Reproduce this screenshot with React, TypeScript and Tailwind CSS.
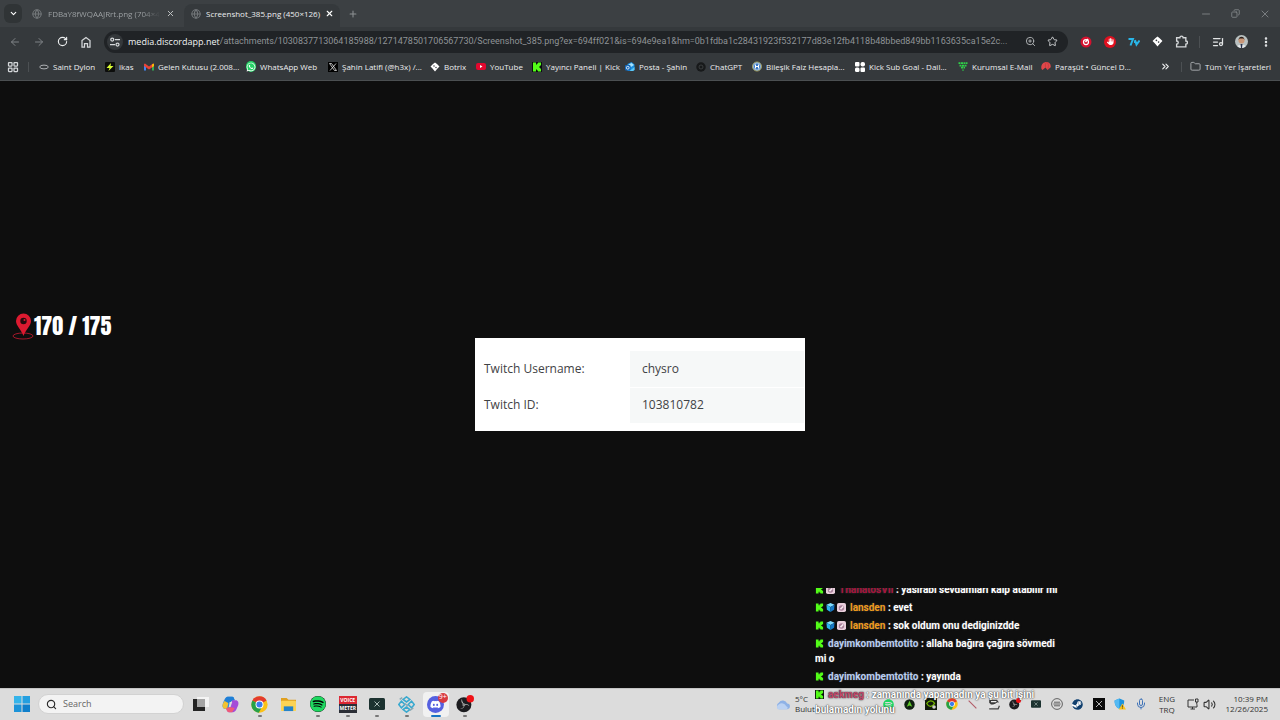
import React from 'react';
import type { ReactNode } from 'react';
import {
  ArrowLeft,
  ArrowRight,
  ChevronDown,
  ChevronsRight,
  Copy,
  EllipsisVertical,
  Folder,
  Globe,
  LayoutGrid,
  ListMusic,
  Mic,
  Minus,
  Plus,
  RotateCw,
  Search,
  Star,
  Volume2,
  X,
  ZoomIn,
} from 'lucide-react';
import { FaDiscord, FaSpotify, FaSteam, FaWhatsapp, FaHand } from 'react-icons/fa6';

function KickIcon({ className }: { className: string }) {
  return (
    <svg viewBox="0 0 20 20" className={className}>
      <rect width="20" height="20" fill="#0b0e0f" />
      <path d="M2 1h6v4h2V3h2V1h6v6h-2v2h-2v2h2v2h2v6h-6v-2h-2v-2H8v4H2z" fill="#53fc18" />
    </svg>
  );
}

function KickBadge() {
  return <KickIcon className="mr-[2px] inline size-[9px] align-[-1px]" />;
}

function GemBadge() {
  return (
    <svg viewBox="0 0 20 20" className="mr-[2px] inline size-[9px] align-[-1px]">
      <path d="M10 0l9 4-9 5-9-5z" fill="#7fdcff" />
      <path d="M1 4l9 5v11l-8-5z" fill="#2bb3f0" />
      <path d="M19 4l-9 5v11l8-5z" fill="#1577c4" />
    </svg>
  );
}

function PinkBadge() {
  return (
    <svg viewBox="0 0 20 20" className="mr-[2px] inline size-[9px] align-[-1px]">
      <rect width="20" height="20" rx="4" fill="#e9cfdc" />
      <circle cx="10" cy="11" r="6" fill="#a77f99" />
      <path d="M6 13l7-7 2 3-6 6z" fill="#f6e8ef" />
    </svg>
  );
}

function ChromeIcon({ className }: { className: string }) {
  return (
    <svg viewBox="0 0 24 24" className={className}>
      <circle cx="12" cy="12" r="11.5" fill="#fbc116" />
      <path d="M12 12L2 6.300A11.500 11.500 0 0 1 22 6.300z" fill="#e33b2e" />
      <path d="M12 12L2 6.300A11.500 11.500 0 0 0 11 23.500l5-9z" fill="#26a148" />
      <circle cx="12" cy="12" r="5.600" fill="#fff" />
      <circle cx="12" cy="12" r="4.300" fill="#3a7cec" />
    </svg>
  );
}

function ObsIcon({ className }: { className: string }) {
  return (
    <svg viewBox="0 0 24 24" className={className}>
      <circle cx="10.500" cy="13" r="10" fill="#1c1c1f" />
      <g fill="#bdbdbd">
        <path d="M8 5c-2 4 0 7 4 8-3-2-4-5-4-8z" />
        <path d="M18 15c-2-4-6-4-8-1 3-2 6-1 8 1z" />
        <path d="M5 18c5 1 7-2 6-6 0 4-2 6-6 6z" />
      </g>
      <circle cx="10.500" cy="13" r="2" fill="#8d8d8d" />
      <circle cx="19" cy="5" r="5" fill="#f01216" />
    </svg>
  );
}

function BotrixIcon({ className }: { className: string }) {
  return (
    <svg viewBox="0 0 20 20" className={className}>
      <path d="M10 1l4 3 5 5-4 4-5 6-5-6-4-4 5-5z" fill="#fff" />
      <circle cx="8" cy="8" r="1.500" fill="#35393c" />
      <circle cx="12" cy="11" r="1.500" fill="#35393c" />
    </svg>
  );
}

// faded globe shown on image tabs
function TabIcon() {
  return <Globe className="size-[10px] shrink-0 text-[#74787b]" strokeWidth={2.500} />;
}

type Bookmark = { label: string; width: string; icon: ReactNode };

const bookmarks: Bookmark[] = [
  {
    label: 'Saint Dylon',
    width: 'w-[66px]',
    icon: (
      <svg viewBox="0 0 20 20" className="size-[10px]">
        <ellipse cx="10" cy="10" rx="8.500" ry="3.800" fill="none" stroke="#aeb1b4" strokeWidth="2" />
      </svg>
    ),
  },
  {
    label: 'ikas',
    width: 'w-[39px]',
    icon: (
      <svg viewBox="0 0 20 20" className="size-[10px]">
        <rect width="20" height="20" rx="2" fill="#0c0d0c" />
        <path d="M12 2l-9 10h6l-2 6 10-10h-6z" fill="#d8fb33" />
      </svg>
    ),
  },
  {
    label: 'Gelen Kutusu (2.008...',
    width: 'w-[102px]',
    icon: (
      <svg viewBox="0 0 20 20" className="size-[10px]">
        <path d="M0 4h4v13H0z" fill="#4285f4" />
        <path d="M16 4h4v13h-4z" fill="#34a853" />
        <path d="M0 4l2-1 8 6 8-6 2 1v4l-10 7L0 8z" fill="#ea4335" />
        <path d="M16 5l4-2v5l-4 3z" fill="#fbbc04" />
      </svg>
    ),
  },
  {
    label: 'WhatsApp Web',
    width: 'w-[82px]',
    icon: (
      <span className="flex size-[11px] items-center justify-center rounded-full bg-[#25d366]">
        <FaWhatsapp className="size-[10px] text-white" />
      </span>
    ),
  },
  {
    label: 'Şahin Latifi (@h3x) /...',
    width: 'w-[102px]',
    icon: (
      <svg viewBox="0 0 20 20" className="size-[10px]">
        <rect width="20" height="20" fill="#000" />
        <path d="M3 3h4l10 14h-4zM16 3L4 17" fill="none" stroke="#eee" strokeWidth="1.500" />
      </svg>
    ),
  },
  { label: 'Botrix', width: 'w-[46px]', icon: <BotrixIcon className="size-[10px]" /> },
  {
    label: 'YouTube',
    width: 'w-[56px]',
    icon: (
      <svg viewBox="0 0 20 20" className="size-[11px]">
        <rect y="3" width="20" height="14" rx="4" fill="#e3072e" />
        <path d="M8 7l5 3-5 3z" fill="#fff" />
      </svg>
    ),
  },
  { label: 'Yayıncı Paneli | Kick', width: 'w-[93px]', icon: <KickIcon className="size-[10px]" /> },
  {
    label: 'Posta - Şahin',
    width: 'w-[71px]',
    icon: (
      <svg viewBox="0 0 20 20" className="size-[11px]">
        <path d="M5 5l8-4 6 5v11l-4 2H5z" fill="#1b8fe0" />
        <path d="M7 6l6-3 5 4-6 4z" fill="#a8e2fb" />
        <path d="M9 19l10-8v6l-3 2z" fill="#5cc8f7" />
        <rect y="7" width="11" height="11" rx="2" fill="#1467b8" />
        <circle cx="5.500" cy="12.500" r="2.800" fill="none" stroke="#fff" strokeWidth="1.600" />
      </svg>
    ),
  },
  {
    label: 'ChatGPT',
    width: 'w-[56px]',
    icon: (
      <svg viewBox="0 0 20 20" className="size-[10px]">
        <circle cx="10" cy="10" r="9.500" fill="#17191a" />
        <circle cx="10" cy="10" r="4" fill="none" stroke="#44484a" strokeWidth="1.500" />
      </svg>
    ),
  },
  {
    label: 'Bileşik Faiz Hesapla...',
    width: 'w-[103px]',
    icon: (
      <svg viewBox="0 0 20 20" className="size-[11px]">
        <circle cx="10" cy="10" r="9" fill="#3b78c4" stroke="#d5c35a" strokeWidth="1.500" />
        <circle cx="10" cy="10" r="7" fill="none" stroke="#dfe9f5" strokeWidth="1.200" />
        <path d="M7 6v8M13 6v8M7 10h6" stroke="#fff" strokeWidth="2" />
      </svg>
    ),
  },
  {
    label: 'Kick Sub Goal - Dail...',
    width: 'w-[103px]',
    icon: (
      <svg viewBox="0 0 20 20" className="size-[10px]" fill="#fff">
        <rect width="9" height="9" rx="2" />
        <rect x="11" width="9" height="9" rx="4" />
        <rect y="11" width="9" height="9" rx="3" />
        <rect x="11" y="11" width="9" height="9" rx="2" />
      </svg>
    ),
  },
  {
    label: 'Kurumsal E-Mail',
    width: 'w-[83px]',
    icon: (
      <svg viewBox="0 0 20 20" className="size-[11px]">
        <path
          d="M1 3h18M3 8h14M6 12h8M9 17h2"
          stroke="#2fd048"
          strokeWidth="3.500"
          strokeDasharray="4 1"
        />
      </svg>
    ),
  },
  {
    label: 'Paraşüt • Güncel D...',
    width: 'w-[100px]',
    icon: (
      <svg viewBox="0 0 20 20" className="size-[11px]">
        <path d="M1 15C-1 7 4 1 11 1c6 0 10 6 8 11l-6 5-4-5-6 5z" fill="#e0474a" />
        <path d="M9 12c-1-4 0-8 2-11M13 17c2-5 3-9 0-15" stroke="#b52f35" fill="none" />
      </svg>
    ),
  },
];

function WindowControls() {
  return (
    <div className="ml-auto flex items-center gap-[19px] pr-[9px] text-[#8d9194]">
      <button aria-label="Minimize">
        <Minus className="size-3" strokeWidth={1.500} />
      </button>
      <button aria-label="Restore">
        <Copy className="size-[9px] -scale-x-100" strokeWidth={2} />
      </button>
      <button aria-label="Close window">
        <X className="size-3" strokeWidth={1.500} />
      </button>
    </div>
  );
}

function TabStrip() {
  return (
    <div className="flex h-[27px] items-center bg-[#3c4043] text-[8px]">
      <button
        aria-label="Search tabs"
        className="ml-[4px] flex h-[19px] w-[18px] items-center justify-center rounded-md bg-[#303436] text-white"
      >
        <ChevronDown className="size-[9px]" strokeWidth={3} />
      </button>
      <div className="flex w-[162px] items-center pl-[10px] text-[#9b9fa2]">
        <TabIcon />
        <span className="ml-[6px] w-[112px] overflow-hidden whitespace-nowrap [mask-image:linear-gradient(to_right,black_85%,transparent)]">
          FDBaY8fWQAAJRrt.png (704×4
        </span>
        <button aria-label="Close tab" className="ml-[6px] text-[#c3c6c8]">
          <X className="size-[9px]" strokeWidth={2.500} />
        </button>
      </div>
      <div className="flex h-[23px] w-[156px] items-center self-end rounded-t-lg bg-[#35393c] pb-[4px] pl-[7px] text-[#eceeef]">
        <TabIcon />
        <span className="ml-[5px] w-[115px] whitespace-nowrap">Screenshot_385.png (450×126)</span>
        <button aria-label="Close tab" className="ml-[4px] text-white">
          <X className="size-[9px]" strokeWidth={3} />
        </button>
      </div>
      <button aria-label="New tab" className="ml-[8px] text-[#8d9194]">
        <Plus className="size-[10px]" strokeWidth={2.500} />
      </button>
      <WindowControls />
    </div>
  );
}

function AddressBar() {
  return (
    <div className="mx-[3px] flex h-[22px] min-w-0 flex-1 items-center rounded-full bg-[#202326] pr-[10px] text-[9px]">
      <button
        aria-label="Site information"
        className="ml-[3px] flex size-4 shrink-0 items-center justify-center rounded-full bg-[#34383b]"
      >
        <svg viewBox="0 0 20 20" className="size-[10px]" fill="none" stroke="#d5d8da" strokeWidth="2.500">
          <path d="M10 5h10M0 15h10" />
          <circle cx="4.500" cy="5" r="3" />
          <circle cx="15" cy="15" r="3" />
        </svg>
      </button>
      <label htmlFor="url" className="ml-[5px] text-[#f1f3f4]">
        media.discordapp.net
      </label>
      <input
        id="url"
        readOnly
        className="min-w-0 flex-1 bg-transparent font-['Roboto',sans-serif] text-ellipsis text-[#8f9396] outline-none"
        value="/attachments/1030837713064185988/1271478501706567730/Screenshot_385.png?ex=694ff021&is=694e9ea1&hm=0b1fdba1c28431923f532177d83e12fb4118b48bbed849bb1163635ca15e2c..."
      />
      <button aria-label="Zoom" className="ml-[8px] text-[#b5b8ba]">
        <ZoomIn className="size-[11px]" />
      </button>
      <button aria-label="Bookmark this page" className="ml-[11px] text-[#d5d8da]">
        <Star className="size-[11px]" />
      </button>
    </div>
  );
}

function Toolbar() {
  return (
    <div className="flex h-[29px] items-center bg-[#35393c] pl-[9px]">
      <div className="flex w-[92px] items-center gap-[12px]">
        <button aria-label="Back" className="text-[#7f8386]">
          <ArrowLeft className="size-3" />
        </button>
        <button aria-label="Forward" className="text-[#7f8386]">
          <ArrowRight className="size-3" />
        </button>
        <button aria-label="Reload" className="text-[#eceeef]">
          <RotateCw className="size-[11px]" strokeWidth={2.500} />
        </button>
        <button aria-label="Home" className="text-[#d5d8da]">
          <svg viewBox="0 0 24 24" className="size-3" fill="none" stroke="currentColor" strokeWidth="2.500">
            <path d="M4 9l8-6 8 6v13h-5v-7H9v7H4z" />
          </svg>
        </button>
      </div>
      <AddressBar />
      <div className="flex w-[209px] items-center">
        <div className="flex w-[117px] items-center justify-between pl-[9px]">
          <button aria-label="Recorder">
            <svg viewBox="0 0 24 24" className="size-3">
              <circle cx="12" cy="12" r="11" fill="#d4122f" />
              <circle cx="12" cy="12" r="5" fill="none" stroke="#fff" strokeWidth="2.500" />
              <path d="M11 12l5-6" stroke="#fff" strokeWidth="3" />
            </svg>
          </button>
          <button
            aria-label="AdBlock"
            className="flex size-3 items-center justify-center rounded-full bg-[#e0101f] text-white"
          >
            <FaHand className="size-[7px]" />
          </button>
          <button aria-label="7TV">
            <svg viewBox="0 0 24 18" className="h-[10px] w-3" fill="none" stroke="#29b6e8" strokeWidth="4">
              <path d="M1 3h9L5 16M14 5l3 9 6-8M12 9h3" />
            </svg>
          </button>
          <button aria-label="Botrix">
            <BotrixIcon className="size-[11px]" />
          </button>
          <button aria-label="Extensions" className="text-[#d5d8da]">
            <svg viewBox="0 0 24 24" className="size-[13px]" fill="none" stroke="currentColor" strokeWidth="2.500">
              <path d="M3 5h6a3 3 0 0 1 6 0h5v6a3 3 0 0 1 0 6v5H3v-5a3 3 0 0 0 0-6z" />
            </svg>
          </button>
        </div>
        <div className="ml-[11px] h-3 w-px bg-[#4c5053]" />
        <button aria-label="Media control" className="ml-[12px] text-[#e3e5e6]">
          <ListMusic className="size-3" strokeWidth={2.500} />
        </button>
        <button aria-label="Profile" className="ml-[11px]">
          <svg viewBox="0 0 26 26" className="size-[13px] rounded-full">
            <rect width="26" height="26" fill="#b9c0c0" />
            <circle cx="13" cy="11" r="6" fill="#c99677" />
            <path d="M7 10c0-9 12-9 12 0l-2-3H9z" fill="#2c211c" />
            <path d="M2 26c2-9 20-9 22 0z" fill="#e7eaec" />
            <path d="M11 18h4l-1 8h-2z" fill="#26304a" />
          </svg>
        </button>
        <button aria-label="Menu" className="ml-[12px] text-[#eceeef]">
          <EllipsisVertical className="size-3" strokeWidth={3} />
        </button>
      </div>
    </div>
  );
}

function BookmarksBar() {
  return (
    <nav className="flex h-[25px] items-center border-b border-[#4b4f51] bg-[#35393c] pb-[3px] text-[8px] text-[#eceeef]">
      <button aria-label="Apps" className="ml-[7px] text-[#d5d8da]">
        <LayoutGrid className="size-3" strokeWidth={2.500} />
      </button>
      <div className="mr-[10px] ml-[9px] h-[10px] w-px bg-[#4c5053]" />
      {bookmarks.map((b) => (
        <a
          key={b.label}
          href="#"
          className={`flex shrink-0 items-center gap-[4px] whitespace-nowrap ${b.width}`}
        >
          <span className="flex w-[10px] shrink-0 justify-center">{b.icon}</span>
          {b.label}
        </a>
      ))}
      <button aria-label="More bookmarks" className="ml-auto">
        <ChevronsRight className="size-[11px]" strokeWidth={2.500} />
      </button>
      <div className="ml-[10px] h-[10px] w-px bg-[#4c5053]" />
      <a href="#" className="mr-[9px] ml-[8px] flex items-center gap-[4px] whitespace-nowrap">
        <Folder className="size-[11px] text-[#aeb1b4]" />
        Tüm Yer İşaretleri
      </a>
    </nav>
  );
}

function AccountTable() {
  return (
    <div className="w-[330px] border border-white bg-white pt-[12px] pb-[7px]">
      <table className="w-full border-collapse text-left text-[12px] leading-[18px] text-[#3f4245]">
        <tbody>
          <tr className="h-[36px]">
            <th className="w-[154px] pl-[8px] font-normal">Twitch Username:</th>
            <td className="border-b border-white bg-[#f6f8f8] pl-[12px]">chysro</td>
          </tr>
          <tr className="h-[36px]">
            <th className="pl-[8px] font-normal">Twitch ID:</th>
            <td className="bg-[#f6f8f8] pl-[12px]">103810782</td>
          </tr>
        </tbody>
      </table>
    </div>
  );
}

function ViewerCounter() {
  return (
    <div className="absolute top-[312px] left-[12px] flex items-center">
      <svg viewBox="0 0 22 28" className="h-[28px] w-[22px]">
        <ellipse cx="11" cy="24" rx="10" ry="3" fill="none" stroke="#a3182a" strokeWidth="1" />
        <path d="M11.500 24C9 17 4 14 4 9a7.500 7.500 0 0 1 15 0c0 5-5 8-7.500 15z" fill="#dc1a30" />
        <circle cx="11.500" cy="9" r="3.200" fill="#260a0e" />
        <circle cx="12.500" cy="8" r="1" fill="#dc1a30" />
      </svg>
      <span className="font-['Anton','Oswald','Roboto_Condensed','Roboto',sans-serif] text-[22px] leading-[28px] whitespace-nowrap text-white">
        170 / 175
      </span>
    </div>
  );
}

const messages = [
  { name: 'ThanatosVII', color: 'text-[#a8123c]', text: 'yasirabi sevdamlari kalp atabilir mi', badges: <PinkBadge /> },
  { name: 'lansden', color: 'text-[#f09a1a]', text: 'evet', badges: <><GemBadge /><PinkBadge /></> },
  { name: 'lansden', color: 'text-[#f09a1a]', text: 'sok oldum onu dediginizdde', badges: <><GemBadge /><PinkBadge /></> },
  { name: 'dayimkombemtotito', color: 'text-[#b8cdf2]', text: 'allaha bağıra çağıra sövmedi mi o', badges: null },
  { name: 'dayimkombemtotito', color: 'text-[#b8cdf2]', text: 'yayında', badges: null },
  { name: 'aekmeg', color: 'text-[#c2476c]', text: 'zamanında yapamadın ya şu bit işini bulamadın yolunu', badges: null },
];

function ChatOverlay() {
  return (
    <div className="absolute right-[212px] bottom-0 flex h-[132px] w-[253px] flex-col justify-end gap-[3px] overflow-hidden pb-[3px] font-['Roboto',sans-serif] text-[10px] leading-[15px] font-bold text-white [text-shadow:0_0_1px_#333,0_0_2px_#444]">
      {messages.map((m, i) => (
        <p key={i}>
          <KickBadge />
          {m.badges}
          <span className={`ml-[2px] ${m.color}`}>{m.name}</span> : {m.text}
        </p>
      ))}
    </div>
  );
}

function VoiceIcon() {
  return (
    <span className="flex h-[17px] w-[18px] flex-col bg-[#2b2e35] text-center text-[5px] leading-[8px] font-bold text-white">
      <span className="bg-[#dc2832]">VOICE</span>
      <span>METER</span>
    </span>
  );
}

function GreenXIcon({ className }: { className: string }) {
  return (
    <svg viewBox="0 0 16 12" className={className}>
      <rect width="16" height="12" rx="1.500" fill="#1c3230" />
      <path d="M5.500 3.500l5 5M10.500 3.500l-5 5" stroke="#a8b8b4" />
    </svg>
  );
}

const pinned = [
  {
    name: 'Task view',
    running: false,
    icon: (
      <svg viewBox="0 0 16 16" className="size-4">
        <rect x="4" y="1" width="12" height="10" fill="#f4f4f4" />
        <path d="M0 3h4v8h8v4H0z" fill="#242424" />
        <rect x="4" y="3" width="8" height="8" fill="#a5a5a5" />
      </svg>
    ),
  },
  {
    name: 'Copilot',
    running: false,
    icon: (
      <svg viewBox="0 0 20 20" className="size-[17px]">
        <path d="M7 1h5c2 0 2 2 3 4l-4 1-3 9H4c-3 0-4-3-3-6 2-5 3-8 6-8z" fill="#2b8de3" />
        <path d="M1 9l3-5 4 2-2 9H4c-3 0-4-3-3-6z" fill="#f2c230" />
        <path d="M7 1h5c2 0 2 2 3 4l-4 1-2 3-6-3c1-3 2-5 4-5z" fill="#1f7fd6" />
        <path d="M13 19H8c-2 0-2-2-3-4l4-1 3-9h4c3 0 4 3 3 6-2 5-3 8-6 8z" fill="#a44cd8" />
        <path d="M5 14l4-1 6 1-3 5H8c-2 0-3-3-3-5z" fill="#ef5a78" />
        <path d="M9 7h3l-2 6H8z" fill="#dcdcdc" />
      </svg>
    ),
  },
  { name: 'Chrome', running: true, icon: <ChromeIcon className="size-[17px]" /> },
  {
    name: 'File Explorer',
    running: false,
    icon: (
      <svg viewBox="0 0 18 16" className="h-[15px] w-[17px]">
        <path d="M1 1h6l2 2h8v4H1z" fill="#e0a020" />
        <rect x="1" y="4" width="16" height="11" rx="1" fill="#fcd354" />
        <rect x="4" y="10" width="10" height="5" fill="#2583c9" />
      </svg>
    ),
  },
  {
    name: 'Spotify',
    running: true,
    icon: (
      <span className="rounded-full bg-black">
        <FaSpotify className="size-4 text-[#1ed760]" />
      </span>
    ),
  },
  { name: 'Voicemeeter', running: true, icon: <VoiceIcon /> },
  { name: 'Terminal', running: true, icon: <GreenXIcon className="h-3 w-4" /> },
  {
    name: 'Kube',
    running: true,
    icon: (
      <svg viewBox="0 0 20 20" className="size-[17px]" fill="none" strokeWidth="1.800">
        <path d="M10 1l4 3-4 3-4-3zM4 6l4 4-4 4-3-4zM16 6l3 4-3 4-4-4zM10 13l4 3-4 3-4-3z" stroke="#38a9cf" />
        <path d="M2 4l3-2M14 17l4-3M8 9l4 3" stroke="#8ba9b4" />
      </svg>
    ),
  },
  {
    name: 'Discord',
    running: true,
    icon: (
      <span className="flex size-[17px] items-center justify-center rounded-full bg-[#5560e0]">
        <FaDiscord className="size-[11px] text-white" />
      </span>
    ),
  },
  { name: 'OBS', running: true, icon: <ObsIcon className="size-[18px]" /> },
];

const tray = [
  <FaSpotify className="size-[11px] text-[#1ed760]" />,
  <svg viewBox="0 0 20 20" className="size-[11px]">
    <circle cx="10" cy="10" r="9.500" fill="#102012" />
    <path d="M10 3l5 11-5-2-5 2z" fill="#5fc929" />
  </svg>,
  <svg viewBox="0 0 20 20" className="size-[12px]">
    <rect width="20" height="20" fill="#111a0c" />
    <path d="M3 9c4-6 10-5 13 0-4 7-10 6-13 0z" fill="none" stroke="#76b900" strokeWidth="2" />
    <circle cx="15" cy="15" r="3" fill="#cfd4cb" />
  </svg>,
  <ChromeIcon className="size-[12px]" />,
  <svg viewBox="0 0 20 20" className="size-[11px]">
    <path d="M3 3l14 14" stroke="#b25b66" strokeWidth="2" />
  </svg>,
  <svg viewBox="0 0 20 20" className="size-[12px]">
    <path d="M2 3h13l3 4-5 4H5L2 8z" fill="#3a3a3a" />
    <path d="M3 16l14-8M5 6l9 0" stroke="#eee" strokeWidth="2" />
    <path d="M2 18h15l2-5" fill="none" stroke="#444" strokeWidth="2" />
  </svg>,
  <ObsIcon className="size-[12px]" />,
  <GreenXIcon className="h-[8px] w-[10px]" />,
  <svg viewBox="0 0 20 20" className="size-[12px]" fill="none" stroke="#555" strokeWidth="1.500">
    <circle cx="10" cy="10" r="9" />
    <path d="M5 7h10M4 10h12M5 13h10" />
  </svg>,
  <span className="rounded-full bg-white">
    <FaSteam className="size-[11px] text-[#12406e]" />
  </span>,
  <svg viewBox="0 0 20 20" className="size-[12px]">
    <rect width="20" height="20" fill="#0a0a0a" />
    <path d="M5 5l10 10M15 5L5 15" stroke="#c4c4c4" strokeWidth="1.500" />
  </svg>,
  <svg viewBox="0 0 20 20" className="size-[12px]">
    <path d="M9 1l8 3c0 7-2 11-8 14C3 15 1 11 1 4z" fill="#1b93de" />
    <path d="M9 1v17C3 15 1 11 1 4z" fill="#53b9f2" />
    <path d="M14 9l6 10H8z" fill="#fcc419" />
    <path d="M14 12v4M14 17v1" stroke="#222" strokeWidth="1.200" />
  </svg>,
  <Mic className="size-[12px] text-[#3f73b8]" />,
];

function Taskbar() {
  return (
    <footer className="flex h-[32px] items-center border-t border-[#c4c4c4] bg-[#dcdcdc] pb-px text-[8px] text-[#333]">
      <button aria-label="Start" className="ml-[14px]">
        <svg viewBox="0 0 16 16" className="size-4">
          <path d="M0 0h7.500v7.500H0z" fill="#35b4ea" />
          <path d="M8.500 0H16v7.500H8.500z" fill="#249fe0" />
          <path d="M0 8.500h7.500V16H0z" fill="#1c93d8" />
          <path d="M8.500 8.500H16V16H8.500z" fill="#0f7fcb" />
        </svg>
      </button>
      <label className="ml-[8px] flex h-5 w-[146px] items-center rounded-full border border-[#d2d2d2] bg-[#f3f3f3] pl-[7px]">
        <Search className="size-[11px] text-[#2b2b2b]" strokeWidth={2.500} />
        <input
          aria-label="Search"
          placeholder="Search"
          className="ml-[6px] w-[100px] bg-transparent text-[9px] outline-none placeholder:text-[#666]"
        />
      </label>
      <div className="ml-[2px] flex w-[294px]">
        {pinned.map((app) => (
          <button
            key={app.name}
            aria-label={app.name}
            className="relative flex h-[31px] flex-1 items-center justify-center"
          >
            {app.name === 'Discord' && <span className="absolute inset-x-[2px] inset-y-[3px] rounded bg-[#f1f1f1]" />}
            <span className="relative flex">{app.icon}</span>
            {app.name === 'Discord' && (
              <span className="absolute top-[4px] right-[3px] flex size-[10px] items-center justify-center rounded-full bg-[#d83a42] text-[7px] text-white">
                9+
              </span>
            )}
            {app.running && app.name !== 'Discord' && (
              <span className="absolute bottom-[3px] h-[2px] w-[4px] rounded-full bg-[#777]" />
            )}
            {app.name === 'Discord' && (
              <span className="absolute bottom-[3px] h-[2px] w-[10px] rounded-full bg-[#1673c4]" />
            )}
          </button>
        ))}
      </div>
      <button className="ml-auto flex items-center gap-[4px] text-left leading-[10px]">
        <svg viewBox="0 0 18 14" className="h-[13px] w-[17px]">
          <path d="M5 12a4 4 0 0 1 0-7 5 5 0 0 1 9 1 3 3 0 0 1 0 6z" fill="#8fb2e6" />
          <path d="M4 12a3 3 0 0 1 1-5 5 5 0 0 1 8 2 2 2 0 0 1 1 3z" fill="#bcd2f2" />
        </svg>
        <span className="w-[83px]">
          5°C
          <br />
          Bulutlu
        </span>
      </button>
      <div className="flex">
        {tray.map((icon, i) => (
          <span key={i} className="flex w-[21px] items-center justify-center">
            {icon}
          </span>
        ))}
      </div>
      <button className="ml-[4px] w-[24px] text-center leading-[11px]">
        ENG
        <br />
        TRQ
      </button>
      <button aria-label="Network" className="ml-[8px]">
        <svg viewBox="0 0 24 24" className="size-3" fill="none" stroke="currentColor" strokeWidth="2">
          <path d="M14 4H2v14h18v-5M7 22h9M11 18v4" />
          <path d="M17 2h5v6h-5zM19.500 8v5" />
        </svg>
      </button>
      <button aria-label="Volume" className="ml-[4px]">
        <Volume2 className="size-[13px]" />
      </button>
      <button className="mr-[12px] w-[52px] text-right leading-[10px] whitespace-nowrap">
        10:39 PM
        <br />
        12/26/2025
      </button>
    </footer>
  );
}

export default function App() {
  return (
    <div className="relative flex min-h-screen w-full flex-col overflow-hidden bg-[#0e0e0e] font-['Open_Sans','Noto_Sans',sans-serif]">
      <header>
        <TabStrip />
        <Toolbar />
        <BookmarksBar />
      </header>
      <main className="flex flex-1 items-center justify-center">
        <AccountTable />
      </main>
      <Taskbar />
      <ViewerCounter />
      <ChatOverlay />
    </div>
  );
}
